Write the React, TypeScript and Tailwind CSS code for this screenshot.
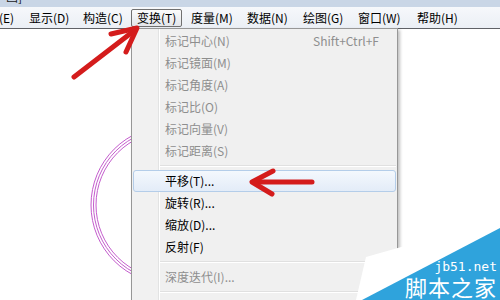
const font = { fontFamily: '"Noto Sans CJK SC", "Noto Sans", sans-serif' };

const menus = [
  { label: "编辑(E)", w: "w-[51px] ml-[-31px]" },
  { label: "显示(D)", w: "w-[51px]" },
  { label: "构造(C)", w: "w-[51px]" },
  { label: "变换(T)", w: "w-[51px]", active: true },
  { label: "度量(M)", w: "w-[53px]" },
  { label: "数据(N)", w: "w-[53px]" },
  { label: "绘图(G)", w: "w-[52px]" },
  { label: "窗口(W)", w: "w-[56px]" },
  { label: "帮助(H)", w: "w-[50px]" },
];

type Entry =
  | { sep: true }
  | { label: string; disabled?: boolean; shortcut?: string; hover?: boolean };

const entries: Entry[] = [
  { label: "标记中心(N)", disabled: true, shortcut: "Shift+Ctrl+F" },
  { label: "标记镜面(M)", disabled: true },
  { label: "标记角度(A)", disabled: true },
  { label: "标记比(O)", disabled: true },
  { label: "标记向量(V)", disabled: true },
  { label: "标记距离(S)", disabled: true },
  { sep: true },
  { label: "平移(T)...", hover: true },
  { label: "旋转(R)..." },
  { label: "缩放(D)..." },
  { label: "反射(F)" },
  { sep: true },
  { label: "深度迭代(I)...", disabled: true },
  { sep: true },
];

const MenuBar = () => (
  <div className="flex h-[22px] items-center gap-[3px] border-b border-[#5f6166] bg-[linear-gradient(to_bottom,#f6f8fb,#ebeff5)]">
    {menus.map((m) => (
      <span
        key={m.label}
        className={`flex h-[18px] shrink-0 items-center rounded-[2px] border pl-[5px] text-[12px] text-black ${m.w} ${
          m.active
            ? "border-[#707070] bg-[linear-gradient(to_bottom,#fbfbfb,#e4e6ea)]"
            : "border-transparent"
        }`}
      >
        {m.label}
      </span>
    ))}
  </div>
);

const Dropdown = () => (
  <div className="absolute left-[131px] top-[-1px] w-[267px] border border-[#979797] bg-[#f0f0f0] px-[1px] pt-[1px] shadow-[2px_2px_3px_rgba(0,0,0,0.25)] bg-[linear-gradient(to_right,#f1f1f1_26px,#e2e3e3_26px,#e2e3e3_27px,#ffffff_27px,#ffffff_28px,#f0f0f0_28px)]">
    {entries.map((e, i) =>
      "sep" in e ? (
        <div key={i} className="flex h-[8px] flex-col justify-center pl-[27px]">
          <div className="h-px bg-[#e0e0e0]" />
          <div className="h-px bg-white" />
        </div>
      ) : (
        <div
          key={i}
          className={`flex h-[22px] items-center justify-between rounded-[3px] border pl-[31px] pr-[16px] text-[12px] ${
            e.hover
              ? "border-[#b4cde9] bg-[linear-gradient(to_bottom,#f4f8fd,#e3ecf8)]"
              : "border-transparent"
          } ${e.disabled ? "text-[#8e8e8e]" : "text-black"}`}
        >
          <span>{e.label}</span>
          {e.shortcut ? <span className="text-[#8e8e8e]">{e.shortcut}</span> : null}
        </div>
      )
    )}
    <div className="h-[22px]" />
  </div>
);

export default function App() {
  return (
    <div className="relative flex h-[300px] w-[500px] flex-col overflow-hidden bg-white" style={font}>
      <div className="h-[7px] overflow-hidden bg-[#c9d6e6] pl-[6px]">
        <div className="mt-[-11px] text-[12px] leading-[16px] text-[#1b1b1b]">画]</div>
      </div>
      <MenuBar />
      <div className="relative flex-1">
        <svg className="absolute inset-0" width="500" height="271" viewBox="0 29 500 271">
          <g fill="none" stroke="#c45ccd" strokeWidth="1">
            <circle cx="170" cy="205" r="79" />
            <circle cx="170" cy="205" r="76.5" />
            <circle cx="170" cy="205" r="74" />
          </g>
        </svg>
        <Dropdown />
      </div>

      <svg className="pointer-events-none absolute inset-0" width="500" height="300" viewBox="0 0 500 300">
        <g stroke="#d41c1c" strokeWidth="5" strokeLinecap="round" strokeLinejoin="round" fill="none">
          <path d="M74 77 L135 30" />
          <path d="M111 34 L137 28 L126 52" />
          <path d="M254 182 L312 182" />
          <path d="M273 171 L252 182 L272 194" />
        </g>
        <polygon points="356,300 366,257 500,219 500,300" fill="#ffffff" />
        <polygon points="362,300 500,228 500,300" fill="#2fa3dc" />
      </svg>

      <div className="pointer-events-none absolute bottom-[2px] right-[3px] flex flex-col items-end gap-[1px] text-white">
        <span className="text-[13px] leading-[14px]" style={{ fontFamily: '"DejaVu Sans Mono", monospace' }}>
          jb51.net
        </span>
        <span className="text-[22px] leading-[23px] tracking-[1px]">脚本之家</span>
      </div>
    </div>
  );
}
